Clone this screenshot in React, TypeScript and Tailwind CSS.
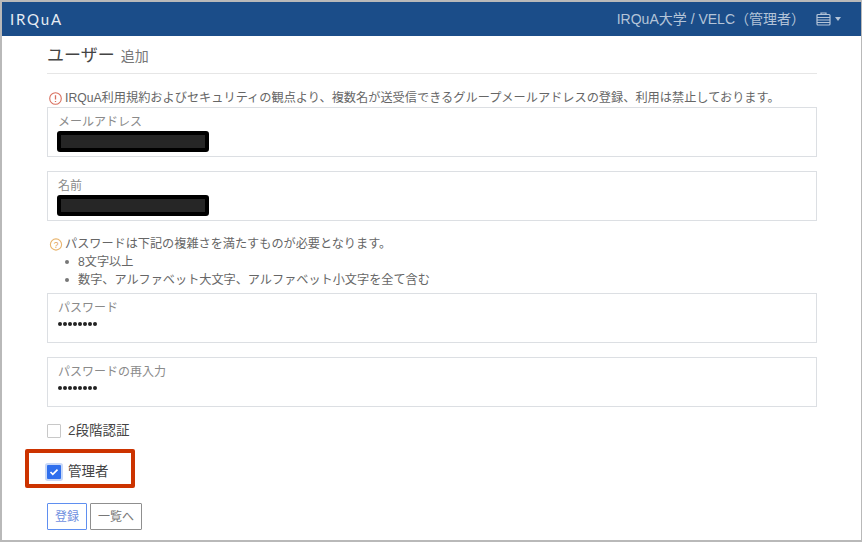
const font = { fontFamily: '"Liberation Sans", "Noto Sans CJK JP", sans-serif' };

function Field({ label, children, cls }: { label: string; children: React.ReactNode; cls?: string }) {
  return (
    <div className={`h-[50px] border border-[#dcdfe3] bg-white pl-[10px] flex flex-col ${cls ?? ""}`}>
      <div className="text-[12px] leading-[18px] mt-[5px] text-[#8a8a8a]">{label}</div>
      {children}
    </div>
  );
}

function Redact({ w }: { w: string }) {
  return <div className={`h-[21px] ${w} -ml-[1px] border-[4px] border-black rounded-[3px] bg-[#262626]`} />;
}

function Dots() {
  return (
    <div className="flex gap-[1px] mt-[5px] h-[4px]">
      {Array.from({ length: 8 }).map((_, i) => (
        <span key={i} className="w-[4px] h-[4px] rounded-full bg-[#222]" />
      ))}
    </div>
  );
}

export default function App() {
  return (
    <div style={font} className="w-[862px] h-[542px] bg-white border-t-2 border-b-2 border-l-2 border-r border-[#b9b9b9] overflow-hidden text-[#555]">
      <header className="h-[34px] bg-[#1b4d89] flex items-center justify-between pl-[8px] pr-[20px]">
        <span className="text-[15px] font-normal tracking-[1.8px] text-[#e6ecf3]" style={{ fontFamily: 'Lato, sans-serif' }}>IRQuA</span>
        <div className="flex items-center">
          <span className="text-[14px] text-[#b4c4d8]">IRQuA大学 / VELC（管理者）</span>
          <svg className="ml-[11px]" width="16" height="14" viewBox="0 0 16 14" fill="none" stroke="#b4c4d8" strokeWidth="1.2">
            <rect x="1" y="2.5" width="13" height="10.5" rx="1" />
            <path d="M5 2.5V1h5v1.5M1 5.5h13M1 8h13M1 10.5h13" />
          </svg>
          <span className="ml-[3px] w-0 h-0 border-l-[3.5px] border-r-[3.5px] border-t-[4px] border-l-transparent border-r-transparent border-t-[#b4c4d8]" />
        </div>
      </header>

      <main className="ml-[45px] w-[770px]">
        <div className="h-[38px] border-b border-[#e6e6e6] flex items-baseline pt-[7px]">
          <span className="text-[17px] leading-[26px] text-[#444]">ユーザー</span>
          <span className="ml-[6px] text-[14px] text-[#777]">追加</span>
        </div>

        <div className="mt-[15px] h-[18px] flex items-center text-[12.2px] text-[#666] whitespace-nowrap">
          <svg width="15" height="15" viewBox="0 0 15 15" fill="none" className="shrink-0 ml-[1px]">
            <circle cx="7.5" cy="7.5" r="5.8" stroke="#d9705f" strokeWidth="1.1" />
            <path d="M7.5 4.2v4.2M7.5 9.9v1.1" stroke="#d9705f" strokeWidth="1.3" />
          </svg>
          <span className="ml-[2px]">IRQuA利用規約およびセキュリティの観点より、複数名が送受信できるグループメールアドレスの登録、利用は禁止しております。</span>
        </div>

        <Field label="メールアドレス"><Redact w="w-[152px]" /></Field>
        <Field label="名前" cls="mt-[14px]"><Redact w="w-[152px]" /></Field>

        <div className="mt-[14px] h-[18px] flex items-center text-[12.15px] text-[#666] whitespace-nowrap">
          <svg width="15" height="15" viewBox="0 0 15 15" fill="none" className="shrink-0 ml-[2px]">
            <circle cx="7" cy="7.5" r="5.6" stroke="#e9b56f" strokeWidth="1.1" />
            <text x="7" y="10.5" textAnchor="middle" fontSize="8.5" fill="#e0a050" fontFamily="Liberation Sans">?</text>
          </svg>
          <span className="ml-[1px]">パスワードは下記の複雑さを満たすものが必要となります。</span>
        </div>
        <ul className="text-[12.15px] leading-[18px] text-[#666] whitespace-nowrap">
          <li className="flex items-center pl-[18px]"><span className="w-[4px] h-[4px] rounded-full bg-[#777] mr-[9px]" />8文字以上</li>
          <li className="flex items-center pl-[18px]"><span className="w-[4px] h-[4px] rounded-full bg-[#777] mr-[9px]" />数字、アルファベット大文字、アルファベット小文字を全て含む</li>
        </ul>

        <Field label="パスワード" cls="mt-[4px]"><Dots /></Field>
        <Field label="パスワードの再入力" cls="mt-[14px]"><Dots /></Field>

        <label className="mt-[15px] h-[18px] flex items-center">
          <span className="w-[14px] h-[14px] border border-[#c8c8c8] rounded-[1px] bg-white" />
          <span className="ml-[7px] text-[13.5px] text-[#444]">2段階認証</span>
        </label>

        <div className="relative mt-[22px] h-[20px] flex items-center">
          <div className="absolute -left-[22px] -top-[13px] w-[110px] h-[39px] border-[4px] border-[#cc3300] rounded-[2px]" />
          <span className="w-[14px] h-[14px] rounded-[1px] bg-[#2f6fed] flex items-center justify-center shadow-[0_0_0_2px_#c7d8f8]">
            <svg width="10" height="8" viewBox="0 0 10 8" fill="none">
              <path d="M1.5 4l2.3 2.3L8.5 1.6" stroke="#fff" strokeWidth="1.7" />
            </svg>
          </span>
          <span className="ml-[7px] text-[13.5px] text-[#444]">管理者</span>
        </div>

        <div className="mt-[21px] flex gap-[3px]">
          <button className="w-[40px] h-[27px] border border-[#5f8ff0] rounded-[1px] text-[12px] text-[#6f8fe0] bg-white">登録</button>
          <button className="w-[52px] h-[27px] border border-[#8f8f8f] rounded-[1px] text-[12px] text-[#777] bg-white">一覧へ</button>
        </div>
      </main>
    </div>
  );
}
